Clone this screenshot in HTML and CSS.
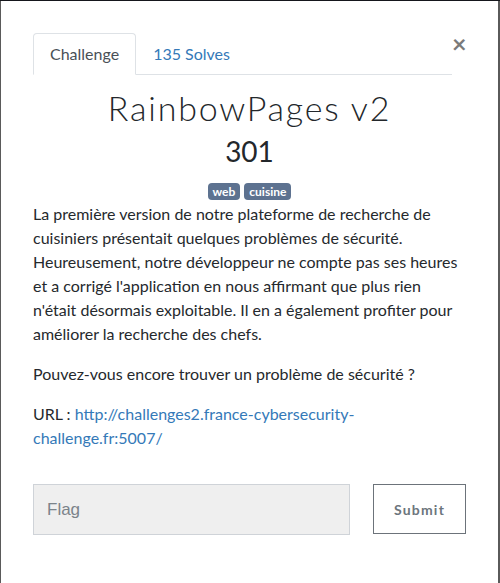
FILE: index.html
```html
<!DOCTYPE html>
<html lang="fr">
<head>
<meta charset="utf-8">
<title>RainbowPages v2</title>
<link rel="stylesheet" href="styles.css">
</head>
<body>
<div class="modal">
  <div class="modal-header">
    <ul class="tabs">
      <li class="tab active">Challenge</li>
      <li class="tab">135 Solves</li>
    </ul>
    <button class="close" type="button" aria-label="Close">×</button>
  </div>
  <div class="modal-body">
    <h2 class="title">RainbowPages v2</h2>
    <div class="value">301</div>
    <div class="tags">
      <span class="badge">web</span>
      <span class="badge">cuisine</span>
    </div>
    <div class="description">
      <p>La première version de notre plateforme de recherche de cuisiniers présentait quelques problèmes de sécurité. Heureusement, notre développeur ne compte pas ses heures et a corrigé l'application en nous affirmant que plus rien n'était désormais exploitable. Il en a également profiter pour améliorer la recherche des chefs.</p>
      <p>Pouvez-vous encore trouver un problème de sécurité ?</p>
      <p>URL : <a href="#">http://challenges2.france-cybersecurity-challenge.fr:5007/</a></p>
    </div>
    <form class="flag-form">
      <input class="flag-input" type="text" placeholder="Flag">
      <button class="submit" type="button">Submit</button>
    </form>
  </div>
</div>
</body>
</html>
```

FILE: styles.css
```css
html, body {
  margin: 0;
  padding: 0;
}
body {
  background: #5a5a5a;
  border-top: 1px solid #15161c;
  font-family: Lato, "Open Sans", sans-serif;
  color: #25292d;
}
.modal {
  background: #fff;
  margin: 0 2px 0 1px;
  height: 582px;
  padding: 32px 32px 0 32px;
  box-sizing: border-box;
  overflow: hidden;
}
.modal-header {
  display: flex;
  align-items: flex-start;
}
.tabs {
  flex: 1;
  display: flex;
  list-style: none;
  margin: 0;
  padding: 0;
  border-bottom: 1px solid #dee2e6;
}
.tab {
  padding: 8px 16px;
  font-size: 16px;
  line-height: 24px;
  border: 1px solid transparent;
  border-radius: 4px 4px 0 0;
  margin-bottom: -1px;
  color: #3479b8;
}
.tab.active {
  color: #495057;
  border-color: #dee2e6 #dee2e6 #fff;
  background: #fff;
}
.close {
  width: 14px;
  padding: 0;
  margin: 0;
  border: 0;
  background: none;
  font-family: Lato, sans-serif;
  font-size: 25px;
  font-weight: 700;
  line-height: 1;
  color: #7a7a7a;
  margin-top: -2px;
  text-align: right;
  cursor: pointer;
}
.modal-body {
  padding-top: 13px;
}
.title {
  margin: 0;
  text-align: center;
  font-size: 34px;
  line-height: 1.2;
  font-weight: 300;
  letter-spacing: 1.8px;
  color: #23272b;
}
.value {
  text-align: center;
  font-size: 28px;
  line-height: 1.2;
  font-weight: 400;
  margin-top: 6px;
  color: #23272b;
}
.tags {
  display: flex;
  justify-content: center;
  gap: 4px;
  margin-top: 15px;
}
.badge {
  background: #5d7290;
  color: #fff;
  font-size: 12px;
  font-weight: 700;
  line-height: 17px;
  padding: 0 5px;
  border-radius: 4px;
}
.description {
  margin-top: 2px;
}
.description p {
  margin: 0 0 16px;
  font-size: 16px;
  line-height: 24px;
}
.description a {
  color: #3479b8;
  text-decoration: none;
}
.flag-form {
  display: flex;
  gap: 23px;
  margin-top: 34px;
}
.flag-input {
  flex: 1;
  height: 51px;
  box-sizing: border-box;
  border: 1px solid #cfd3d8;
  background: #efefef;
  padding: 0 13px;
  font-family: "Liberation Sans", Arial, sans-serif;
  font-size: 17px;
  color: #495057;
  border-radius: 0;
  margin: 0;
}
.flag-input::placeholder {
  color: #7b838a;
}
.submit {
  width: 93px;
  height: 50px;
  box-sizing: border-box;
  border: 1px solid #6c737a;
  background: #fff;
  color: #6c757d;
  font-family: Lato, sans-serif;
  font-size: 14px;
  font-weight: 700;
  letter-spacing: 1.2px;
  border-radius: 0;
  padding: 0;
  margin: 0;
}
```
